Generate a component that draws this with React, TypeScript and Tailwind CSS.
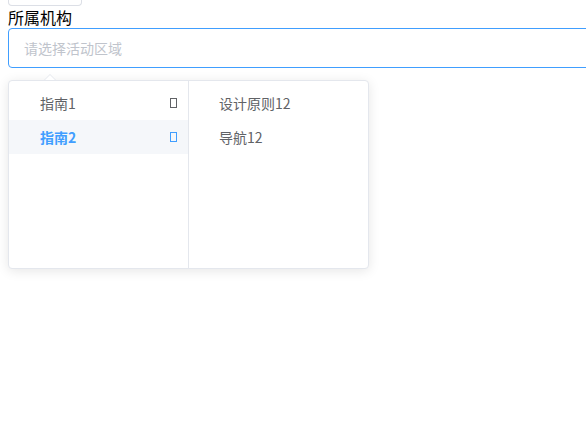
import React from "react";

const left = [
    { label: "指南1", active: false },
    { label: "指南2", active: true },
];
const right = ["设计原则12", "导航12"];

function Tofu({ active }: { active?: boolean }) {
    return (
        <span
            className={`inline-block w-[7px] h-[10px] border ${active ? "border-[#409eff]" : "border-[#606266]"}`}
        />
    );
}

export default function App() {
    return (
        <div className="px-2 font-['Noto_Sans_CJK_SC',sans-serif] overflow-hidden w-[586px] h-[446px] bg-white">
            <div className="w-[74px] h-[6px] border-x border-b border-[#dcdfe6] rounded-b" />
            <div className="text-[16px] leading-[22px] text-black">所属机构</div>
            <div className="w-[620px] h-[40px] border border-[#409eff] rounded flex items-center px-[15px] text-[14px] text-[#c0c4cc]">
                请选择活动区域
            </div>
            <div className="relative mt-[12px] w-[361px]">
                <div className="absolute -top-[6px] left-[36px] w-0 h-0 border-x-[6px] border-x-transparent border-b-[6px] border-b-[#e4e7ed]" />
                <div className="absolute -top-[5px] left-[37px] w-0 h-0 border-x-[5px] border-x-transparent border-b-[5px] border-b-white" />
                <div className="flex h-[189px] border border-[#e4e7ed] rounded bg-white shadow-[0_2px_12px_0_rgba(0,0,0,0.1)] text-[14px]">
                    <div className="w-[180px] border-r border-[#e4e7ed] py-[5px]">
                        {left.map((item) => (
                            <div
                                key={item.label}
                                className={`h-[34px] flex items-center justify-between pl-[31px] pr-[11px] ${item.active ? "bg-[#f5f7fa] text-[#409eff] font-bold" : "text-[#606266]"}`}
                            >
                                <span>{item.label}</span>
                                <Tofu active={item.active} />
                            </div>
                        ))}
                    </div>
                    <div className="flex-1 py-[5px]">
                        {right.map((label) => (
                            <div key={label} className="h-[34px] flex items-center pl-[30px] text-[#606266]">
                                {label}
                            </div>
                        ))}
                    </div>
                </div>
            </div>
        </div>
    );
}
